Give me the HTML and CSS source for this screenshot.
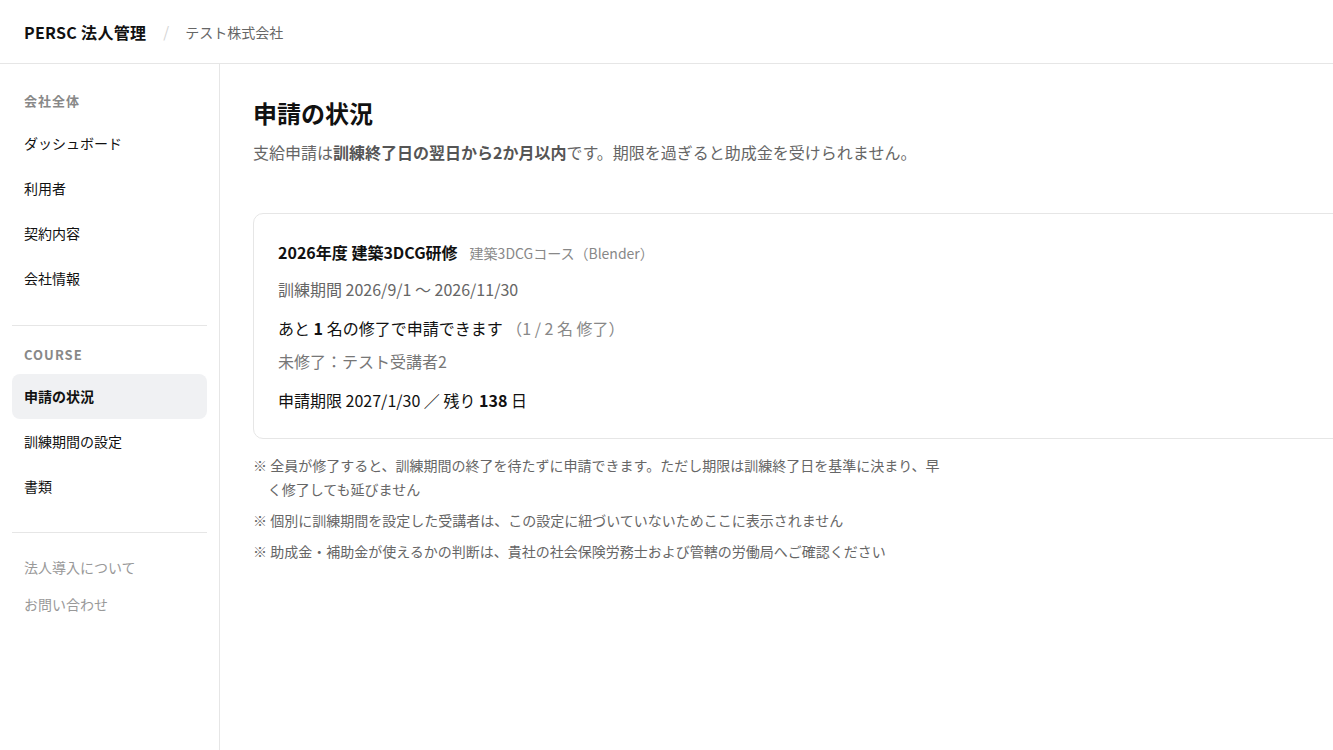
FILE: index.html
```html
<!DOCTYPE html>
<html lang="ja">
<head>
  <meta charset="UTF-8" />
  <meta name="viewport" content="width=device-width, initial-scale=1.0" />
  <title>申請の状況 | PERSC 法人管理</title>
  <link rel="stylesheet" href="styles.css">
</head>
<body>
<!-- Header -->
<header class="topbar">
  <div class="brand">PERSC 法人管理</div>
  <span class="sep">/</span>
  <div class="company">テスト株式会社</div>
</header>

<div class="layout">
  <!-- Sidebar -->
  <nav class="sidebar">
    <div class="nav-label">会社全体</div>
    <a class="nav-item" href="#">ダッシュボード</a>
    <a class="nav-item" href="#">利用者</a>
    <a class="nav-item" href="#">契約内容</a>
    <a class="nav-item" href="#">会社情報</a>

    <hr class="nav-divider">

    <div class="nav-label nav-label-course">COURSE</div>
    <a class="nav-item active" href="#">申請の状況</a>
    <a class="nav-item" href="#">訓練期間の設定</a>
    <a class="nav-item" href="#">書類</a>

    <hr class="nav-divider nav-divider-last">

    <a class="nav-sub" href="#">法人導入について</a>
    <a class="nav-sub" href="#">お問い合わせ</a>
  </nav>

  <!-- Main Content -->
  <main class="main">
    <h1 class="page-title">申請の状況</h1>
    <p class="page-lead">支給申請は<strong>訓練終了日の翌日から2か月以内</strong>です。期限を過ぎると助成金を受けられません。</p>

    <section class="card">
      <div class="card-title">
        <span class="course-name">2026年度 建築3DCG研修</span>
        <span class="course-sub">建築3DCGコース（Blender）</span>
      </div>
      <div class="period">訓練期間 2026/9/1 〜 2026/11/30</div>
      <div class="status">あと <b>1</b> 名の修了で申請できます <span class="status-count">（1 / 2 名 修了）</span></div>
      <div class="pending">未修了：テスト受講者2</div>
      <div class="deadline">申請期限 2027/1/30 ／ 残り <b>138</b> 日</div>
    </section>

    <ul class="notes">
      <li>※ 全員が修了すると、訓練期間の終了を待たずに申請できます。ただし期限は訓練終了日を基準に決まり、早く修了しても延びません</li>
      <li>※ 個別に訓練期間を設定した受講者は、この設定に紐づいていないためここに表示されません</li>
      <li>※ 助成金・補助金が使えるかの判断は、貴社の社会保険労務士および管轄の労働局へご確認ください</li>
    </ul>
  </main>
</div>
</body>
</html>
```

FILE: styles.css
```css
/* Global */
body {
  margin: 0;
  font-family: "Noto Sans CJK JP", "Noto Sans", sans-serif;
  color: #111;
  background: #fff;
  overflow: hidden;
}
a {
  text-decoration: none;
  color: inherit;
}

/* Header */
.topbar {
  display: flex;
  align-items: center;
  height: 63px;
  padding: 0 24px;
  border-bottom: 1px solid #e6e6e6;
}
.brand {
  font-size: 16px;
  font-weight: 700;
  color: #111;
  letter-spacing: 0.3px;
}
.sep {
  margin: 0 16px 0 17px;
  color: #d4d4d4;
  font-size: 15px;
}
.company {
  font-size: 14px;
  color: #666;
}

/* Layout */
.layout {
  display: flex;
  min-height: 686px;
}
.sidebar {
  width: 220px;
  flex-shrink: 0;
  box-sizing: border-box;
  border-right: 1px solid #e6e6e6;
  padding: 27px 12px;
  display: flex;
  flex-direction: column;
}
.nav-label {
  font-size: 13px;
  font-weight: 700;
  color: #888;
  letter-spacing: 0.08em;
  line-height: 20px;
  padding: 0 12px;
  margin-bottom: 10px;
}
.nav-label-course {
  margin-bottom: 9px;
}
.nav-item {
  display: block;
  font-size: 14px;
  line-height: 21px;
  padding: 12px 12px;
  border-radius: 8px;
  color: #111;
}
.nav-item.active {
  background: #f0f1f3;
  font-weight: 700;
}
.nav-divider {
  border: none;
  border-top: 1px solid #e6e6e6;
  margin: 24px 0 19px;
}
.nav-divider-last {
  margin: 23px 0 16px;
}
.nav-sub {
  display: block;
  font-size: 14px;
  line-height: 21px;
  padding: 8px 12px;
  color: #999;
}

/* Main */
.main {
  flex: 1;
  min-width: 0;
  padding: 32px 0 32px 33px;
  overflow: hidden;
}
.page-title {
  margin: 0;
  font-size: 24px;
  font-weight: 700;
  line-height: 34px;
}
.page-lead {
  margin: 9px 0 0;
  font-size: 16px;
  line-height: 26px;
  color: #666;
}
.page-lead strong {
  color: #555;
}

/* Course card */
.card {
  width: 1100px;
  box-sizing: border-box;
  margin-top: 48px;
  border: 1px solid #e6e6e6;
  border-radius: 10px;
  padding: 26px 24px 26px;
}
.card-title {
  display: flex;
  align-items: baseline;
  gap: 12px;
  line-height: 24px;
}
.course-name {
  font-size: 16px;
  font-weight: 700;
}
.course-sub {
  font-size: 14px;
  color: #888;
}
.period {
  margin-top: 12px;
  font-size: 16px;
  line-height: 24px;
  color: #666;
}
.status {
  margin-top: 15px;
  font-size: 16px;
  line-height: 24px;
  color: #111;
}
.status-count {
  color: #888;
}
.pending {
  margin-top: 9px;
  font-size: 16px;
  line-height: 24px;
  color: #777;
}
.deadline {
  margin-top: 15px;
  font-size: 16px;
  line-height: 24px;
  color: #111;
}

/* Notes */
.notes {
  list-style: none;
  margin: 14px 0 0;
  padding: 0;
  max-width: 690px;
  display: flex;
  flex-direction: column;
  gap: 7px;
}
.notes li {
  font-size: 14px;
  line-height: 24px;
  color: #666;
  padding-left: 1.05em;
  text-indent: -1.05em;
}
```
